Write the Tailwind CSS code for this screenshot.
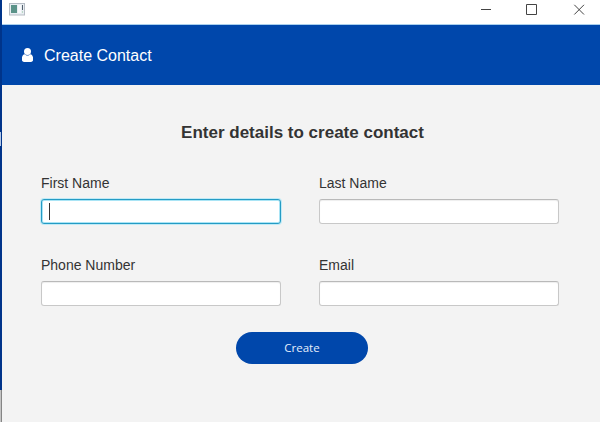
<!DOCTYPE html>
<html lang="en">
<head>
<meta charset="utf-8">
<title>Create Contact</title>
<script src="https://cdn.jsdelivr.net/npm/@tailwindcss/browser@4"></script>
</head>
<body class="flex h-[422px] w-[600px] overflow-hidden bg-[#f3f3f3] font-['Liberation_Sans',Arial,sans-serif] text-[#333]">
  <!-- Sliver of the window behind -->
  <div class="flex w-[2px] shrink-0 flex-col overflow-hidden bg-[#00348a]">
    <div class="mt-[132px] h-[14px] w-px bg-[#b4c8e8]"></div>
    <div class="mt-auto flex h-[32px]"><div class="w-px bg-[#c4c4c4]"></div><div class="w-px bg-[#858585]"></div></div>
  </div>
  <div class="flex min-w-0 flex-1 flex-col">
    <div class="flex h-[25px] shrink-0 justify-between border-b border-[#a9d0ee] bg-white">
      <svg class="mt-[3px] ml-[7px]" width="16" height="13" viewBox="0 0 16 13">
        <rect x=".5" y=".5" width="15" height="11.5" fill="#e9eef2" stroke="#b5bcc4"/>
        <rect x="2" y="2" width="6" height="8" fill="#5b9389"/>
        <rect x="9" y="2" width="3" height="8" fill="#f8fafc"/>
        <rect x="13" y="2" width="1" height="5" fill="#52606d"/>
        <rect x="13" y="8" width="1" height="2" fill="#b9d8c5"/>
      </svg>
      <svg width="120" height="24" viewBox="0 0 120 24" fill="none" stroke="#444">
        <path d="M1 9.5h10"/>
        <path d="M46.500 4.500h10v10h-10z"/>
        <path d="M94.300 4.800l9.700 9.700M104 4.800l-9.700 9.700"/>
      </svg>
    </div>
    <header class="flex h-[60px] shrink-0 items-center bg-[#0047ab] pl-5 text-white">
      <svg class="h-[14px] w-[11px]" viewBox="0 0 11 14" fill="#fff">
        <path d="M2.700 6.300C3.500 7.200 4.500 7.600 5.500 7.600s2-.4 2.800-1.300C10.500 6.500 11.200 9 11.200 11.500 11.200 13 10.200 14 9 14H2C.8 14-.2 13-.2 11.500-.2 9 .5 6.500 2.700 6.300z"/>
        <circle cx="5.500" cy="3.500" r="3.500"/>
      </svg>
      <h1 class="ml-[11px] pt-[2px] text-[16px] leading-5">Create Contact</h1>
    </header>
    <main class="flex flex-col items-center pt-[36px] pr-[41px] pl-[39px]">
      <h2 class="ml-[5px] text-[17px] leading-6 font-bold whitespace-nowrap">Enter details to create contact</h2>
      <form class="mt-[29px] flex w-full flex-col items-center">
        <div class="grid grid-cols-[240px_240px] gap-x-[38px] gap-y-[32px]">
          <label class="flex flex-col text-[14px] leading-[18px]">First Name
            <span class="mt-[7px] flex h-[25px] items-center rounded-[3px] border border-[#249bc4] bg-white pl-[7px] shadow-[0_0_0_1px_#c0eaf6,inset_0_0_0_1px_#a9e4f5]"><span class="h-[17px] w-px bg-[#333]"></span></span>
          </label>
          <label class="flex flex-col text-[14px] leading-[18px]">Last Name
            <input class="mt-[7px] h-[25px] rounded-[3px] border border-[#c8c8c8] border-t-[#b9b9b9] bg-white px-2 shadow-[inset_0_1px_1px_#eee]">
          </label>
          <label class="flex flex-col text-[14px] leading-[18px]">Phone Number
            <input class="mt-[7px] h-[25px] rounded-[3px] border border-[#c8c8c8] border-t-[#b9b9b9] bg-white px-2 shadow-[inset_0_1px_1px_#eee]">
          </label>
          <label class="flex flex-col text-[14px] leading-[18px]">Email
            <input class="mt-[7px] h-[25px] rounded-[3px] border border-[#c8c8c8] border-t-[#b9b9b9] bg-white px-2 shadow-[inset_0_1px_1px_#eee]">
          </label>
        </div>
        <button type="button" class="mt-[25.500px] ml-[4px] h-[32px] w-[132px] rounded-full bg-[#0047ab] pt-px font-['Open_Sans','Noto_Sans',sans-serif] text-[11.500px] leading-4 text-[#e6effb]">Create</button>
      </form>
    </main>
  </div>
</body>
</html>
